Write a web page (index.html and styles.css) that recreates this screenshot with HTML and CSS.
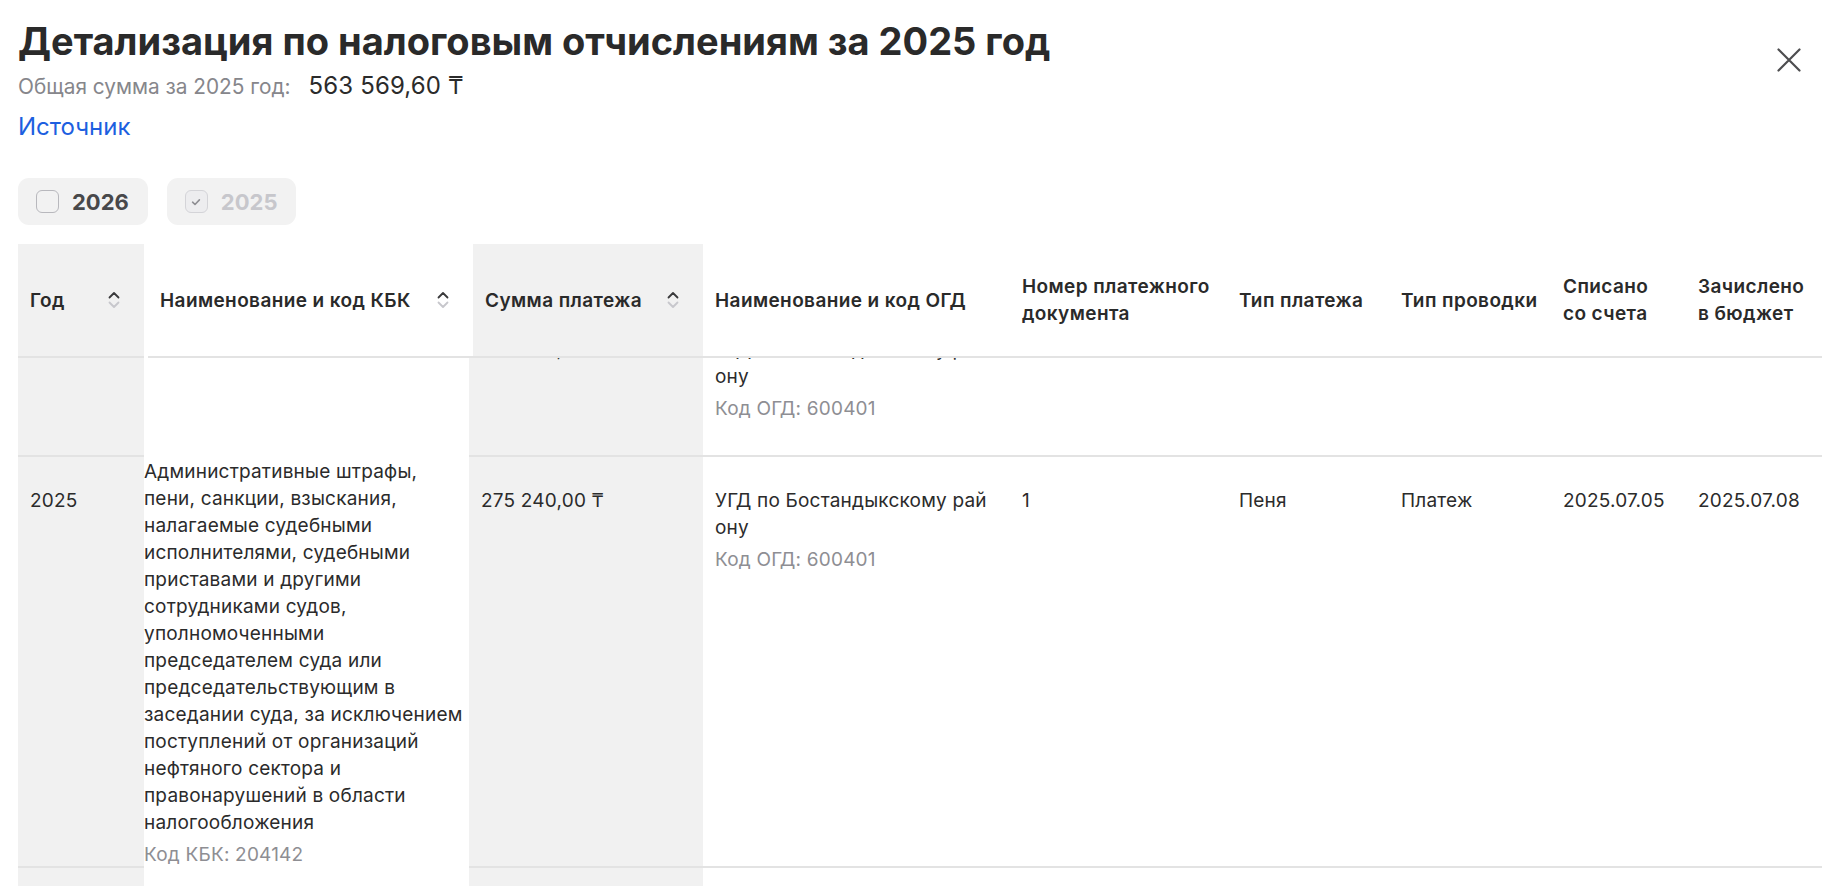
FILE: index.html
```html
<!DOCTYPE html>
<html lang="ru">
<head>
<meta charset="utf-8">
<title>Детализация по налоговым отчислениям</title>
<link rel="stylesheet" href="styles.css">
</head>
<body>
<div class="page">
  <header class="top">
    <div class="heading">
      <h1 class="title">Детализация по налоговым отчислениям за 2025 год</h1>
      <div class="total">
        <span class="total-label">Общая сумма за 2025 год:</span>
        <span class="total-value">563 569,60 ₸</span>
      </div>
      <a class="source" href="#">Источник</a>
    </div>
    <button class="close" type="button" aria-label="Закрыть">
      <svg width="32" height="32" viewBox="0 0 32 32"><path d="M5.5 5.5l21 21M26.5 5.5l-21 21" stroke="#4d4d4f" stroke-width="2.2" stroke-linecap="round" fill="none"/></svg>
    </button>
  </header>

  <div class="filters">
    <label class="chip">
      <span class="box"></span>
      <span class="chip-text">2026</span>
    </label>
    <label class="chip chip-disabled">
      <span class="box box-checked"><svg width="12" height="12" viewBox="0 0 12 12"><path d="M2.6 6.2l2.4 2.3 4.4-4.6" stroke="#8e8e93" stroke-width="1.6" stroke-linecap="round" stroke-linejoin="round" fill="none"/></svg></span>
      <span class="chip-text">2025</span>
    </label>
  </div>

  <div class="table">
    <div class="thead">
      <div class="th shade sortable"><span>Год</span>
        <svg class="sort" width="14" height="20" viewBox="0 0 14 20"><path d="M2.5 7.5L7 3l4.5 4.5" stroke="#3a3a3c" stroke-width="1.8" fill="none" stroke-linecap="round" stroke-linejoin="round"/><path d="M2.5 12.5L7 17l4.5-4.5" stroke="#c7c7cc" stroke-width="1.8" fill="none" stroke-linecap="round" stroke-linejoin="round"/></svg>
      </div>
      <div class="th kbk sortable"><span>Наименование и код КБК</span>
        <svg class="sort" width="14" height="20" viewBox="0 0 14 20"><path d="M2.5 7.5L7 3l4.5 4.5" stroke="#3a3a3c" stroke-width="1.8" fill="none" stroke-linecap="round" stroke-linejoin="round"/><path d="M2.5 12.5L7 17l4.5-4.5" stroke="#c7c7cc" stroke-width="1.8" fill="none" stroke-linecap="round" stroke-linejoin="round"/></svg>
      </div>
      <div class="th shade sortable"><span>Сумма платежа</span>
        <svg class="sort" width="14" height="20" viewBox="0 0 14 20"><path d="M2.5 7.5L7 3l4.5 4.5" stroke="#3a3a3c" stroke-width="1.8" fill="none" stroke-linecap="round" stroke-linejoin="round"/><path d="M2.5 12.5L7 17l4.5-4.5" stroke="#c7c7cc" stroke-width="1.8" fill="none" stroke-linecap="round" stroke-linejoin="round"/></svg>
      </div>
      <div class="th"><span>Наименование и код ОГД</span></div>
      <div class="th"><span>Номер платежного<br>документа</span></div>
      <div class="th"><span>Тип платежа</span></div>
      <div class="th"><span>Тип проводки</span></div>
      <div class="th"><span>Списано<br>со счета</span></div>
      <div class="th"><span>Зачислено<br>в бюджет</span></div>
    </div>

    <div class="viewport">
      <div class="tbody">
        <div class="row row-prev">
          <div class="td shade">2025</div>
          <div class="td kbk"></div>
          <div class="td shade">275 240,00 ₸</div>
          <div class="td">УГД по Бостандыкскому рай<br>ону<span class="code">Код ОГД: 600401</span></div>
          <div class="td">1</div>
          <div class="td">Пеня</div>
          <div class="td">Платеж</div>
          <div class="td">2025.07.05</div>
          <div class="td">2025.07.08</div>
        </div>
        <div class="row">
          <div class="td shade">2025</div>
          <div class="td kbk">Административные штрафы,<br>пени, санкции, взыскания,<br>налагаемые судебными<br>исполнителями, судебными<br>приставами и другими<br>сотрудниками судов,<br>уполномоченными<br>председателем суда или<br>председательствующим в<br>заседании суда, за исключением<br>поступлений от организаций<br>нефтяного сектора и<br>правонарушений в области<br>налогообложения<span class="code">Код КБК: 204142</span></div>
          <div class="td shade">275 240,00 ₸</div>
          <div class="td">УГД по Бостандыкскому рай<br>ону<span class="code">Код ОГД: 600401</span></div>
          <div class="td">1</div>
          <div class="td">Пеня</div>
          <div class="td">Платеж</div>
          <div class="td">2025.07.05</div>
          <div class="td">2025.07.08</div>
        </div>
        <div class="row">
          <div class="td shade">2025</div>
          <div class="td kbk"></div>
          <div class="td shade">12 480,00 ₸</div>
          <div class="td">УГД по Бостандыкскому рай<br>ону</div>
          <div class="td">2</div>
          <div class="td">Налог</div>
          <div class="td">Платеж</div>
          <div class="td">2025.06.10</div>
          <div class="td">2025.06.11</div>
        </div>
      </div>
    </div>
  </div>
</div>
</body>
</html>
```

FILE: styles.css
```css
* { box-sizing: border-box; }

html, body {
  margin: 0;
  background: #ffffff;
}

body {
  font-family: Inter, "Noto Sans", "Liberation Sans", sans-serif;
  color: #2b2b2b;
}

.page {
  height: 886px;
  padding: 18px 8px 0 18px;
  display: flex;
  flex-direction: column;
  overflow: hidden;
}

/* ---------- heading ---------- */
.top {
  display: flex;
  justify-content: space-between;
  align-items: flex-start;
}

.heading {
  display: flex;
  flex-direction: column;
  align-items: flex-start;
}

.title {
  margin: 0;
  font-size: 38px;
  line-height: 46px;
  font-weight: 700;
  color: #2a2a2a;
}

.total {
  margin-top: 7px;
  display: flex;
  align-items: baseline;
  gap: 18px;
  line-height: 30px;
}

.total-label {
  font-size: 20.8px;
  color: #86868b;
}

.total-value {
  font-size: 24px;
  letter-spacing: 0.15px;
  color: #2b2b2b;
}

.source {
  margin-top: 10px;
  font-size: 24px;
  line-height: 30px;
  color: #1d5fe0;
  text-decoration: none;
}

.close {
  margin-top: 26px;
  margin-right: 17px;
  width: 32px;
  height: 32px;
  padding: 0;
  border: 0;
  background: none;
  display: flex;
}

/* ---------- filters ---------- */
.filters {
  margin-top: 36px;
  display: flex;
  gap: 19px;
}

.chip {
  display: flex;
  align-items: center;
  gap: 13px;
  height: 47px;
  padding: 0 19px 0 18px;
  background: #f2f2f2;
  border-radius: 11px;
  font-size: 22px;
  font-weight: 700;
  color: #48484a;
}

.box {
  width: 23px;
  height: 23px;
  border: 1.5px solid #b8b8bd;
  border-radius: 6px;
  display: flex;
  align-items: center;
  justify-content: center;
}

.box-checked {
  border-color: #d4d4d8;
  background: #ededef;
}

.chip-disabled {
  color: #c7c7cc;
}

/* ---------- table ---------- */
.table {
  margin-top: 19px;
  flex: 1;
  min-height: 0;
  display: flex;
  flex-direction: column;
}

.thead {
  display: grid;
  grid-template-columns: 126px 329px 230px 307px 217px 162px 162px 135px 136px;
}

.th {
  height: 114px;
  padding: 0 12px;
  border-bottom: 2px solid #e3e3e3;
  display: flex;
  align-items: center;
  justify-content: space-between;
  font-size: 19px;
  font-weight: 600;
  letter-spacing: 0.4px;
  line-height: 27px;
  color: #2a2a2a;
  white-space: nowrap;
}

.th.sortable {
  padding-right: 23px;
}

.th.kbk {
  margin-left: 4px;
}

.shade {
  background: #f1f1f1;
}

.sort {
  flex: none;
}

.viewport {
  flex: 1;
  min-height: 0;
  overflow: hidden;
}

.tbody {
  margin-top: -52px;
}

.row {
  display: grid;
  grid-template-columns: 126px 325px 234px 307px 217px 162px 162px 135px 136px;
}

.row-prev {
  grid-auto-rows: minmax(151px, auto);
}

.td {
  padding: 30px 12px;
  border-bottom: 2px solid #e3e3e3;
  font-size: 19px;
  letter-spacing: 0.2px;
  line-height: 27px;
  color: #2b2b2b;
  white-space: nowrap;
}

.td.kbk {
  padding: 1px 0 0;
  border-bottom: 0;
}

.code {
  display: block;
  margin-top: 5px;
  color: #8e8e93;
}
```
